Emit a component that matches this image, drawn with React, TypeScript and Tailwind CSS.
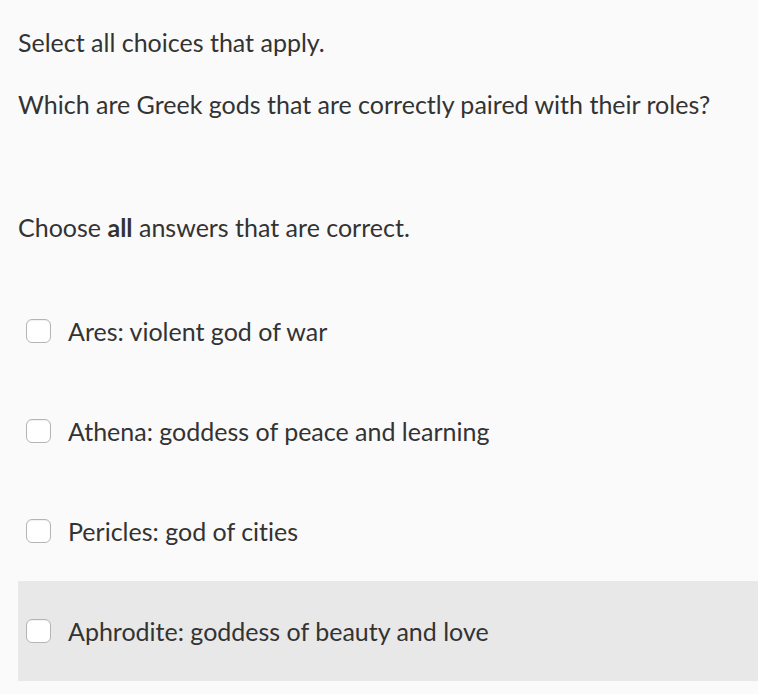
import React from 'react';

const options = [
  'Ares: violent god of war',
  'Athena: goddess of peace and learning',
  'Pericles: god of cities',
  'Aphrodite: goddess of beauty and love',
];

export default function App() {
  const hovered = 3;
  return (
    <div
      className="min-h-[694px] w-[758px] bg-[#fafafa] text-[#333333] text-[25px] leading-[30px] [font-variant-ligatures:none]"
      style={{ fontFamily: 'Lato, "Noto Sans", sans-serif' }}
    >
      <div className="pl-[18px] pt-[27px]">
        <p>Select all choices that apply.</p>
        <p className="mt-[32px]">Which are Greek gods that are correctly paired with their roles?</p>
        <p className="mt-[93px]">
          Choose <b className="font-bold">all</b> answers that are correct.
        </p>
      </div>
      <div className="mt-[39px] pl-[18px]">
        {options.map((opt, i) => (
          <label
            key={opt}
            className={`flex h-[100px] items-center pl-[8px] ${i === hovered ? 'bg-[#e8e8e8]' : ''}`}
          >
            <span className="mr-[17px] h-[24px] w-[25px] shrink-0 rounded-[6px] border border-[#b5b5b5] bg-white shadow-[inset_0_1px_1px_rgba(0,0,0,0.06)]" />
            <span>{opt}</span>
          </label>
        ))}
      </div>
    </div>
  );
}
